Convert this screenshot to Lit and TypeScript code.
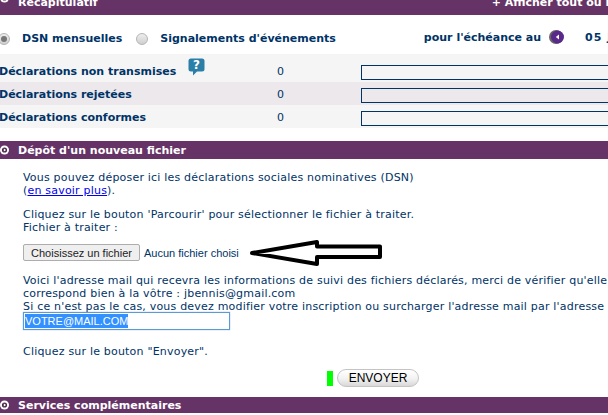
import { LitElement, html, css, svg } from "lit";
import { customElement } from "lit/decorators.js";

const bullet = svg`<svg class="bullet" width="10" height="10" viewBox="0 0 10 10"><circle cx="4.500" cy="5" r="4.500" fill="#fff"/><circle cx="4.500" cy="5" r="2.600" fill="#4a2a4a"/><path d="M3.800 3.400 6.200 5 3.800 6.600z" fill="#fff"/></svg>`;

@customElement("app-root")
export class AppRoot extends LitElement {
  static styles = css`
    :host { display: block; width: 608px; height: 415px; overflow: hidden; background: #fff; font-family: "DejaVu Sans", Verdana, sans-serif; font-size: 11px; color: #003366; }
    .bar { background: #663366; color: #fff; font-weight: bold; display: flex; align-items: center; white-space: nowrap; overflow: hidden; }
    .bar.top { height: 15px; align-items: flex-end; position: relative; }
    .bar.top span { line-height: 13px; margin-bottom: 6px; }
    .bar.top .t { margin-left: 18px; }
    .bar.top .r { margin-left: auto; margin-right: -22px; }
    .bar.top .bullet { position: absolute; left: 0; top: -7px; margin: 0; }
    .bullet { flex: none; }
    .bar .bullet { margin-right: 8px; }
    .bar.sec { height: 18px; margin-top: 13px; }
    .bar.last { height: 16px; }
    .filters { height: 39px; display: flex; align-items: center; padding-top: 8px; box-sizing: border-box; font-weight: bold; white-space: nowrap; }
    .radio { width: 10px; height: 10px; border-radius: 50%; border: 1px solid #b5b5b5; background: linear-gradient(#eee, #cfcfcf); flex: none; display: flex; align-items: center; justify-content: center; }
    .radio.on i { display: block; width: 6px; height: 6px; border-radius: 50%; background: #777; }
    .radio.a { margin-left: -2px; margin-right: 12px; }
    .radio.b { margin-left: 14px; margin-right: 12px; }
    .due { margin-left: 88px; margin-top: -3px; display: flex; align-items: center; }
    .nav { margin: 0 20px 0 8px; flex: none; }
    .date { letter-spacing: 1px; }
    .rows { margin-left: -1px; width: 620px; }
    .row { display: grid; grid-template-columns: 278px 84px 1fr; align-items: end; font-weight: bold; background: #f5f5f5; height: 23px; padding-bottom: 1px; box-sizing: border-box; }
    .row.first { height: 28px; }
    .row.alt { background: #ece8ec; }
    .row .n { font-weight: normal; line-height: 13px; margin-bottom: 3px; }
    .row .lbl { position: relative; line-height: 13px; margin-bottom: 3px; }
    .help { position: absolute; left: 189px; top: -7px; }
    .help text { font: bold 12px "DejaVu Sans", sans-serif; fill: #fff; }
    .prog { height: 15px; border: 1px solid #003366; box-sizing: border-box; margin-bottom: 1px; }
    .body { padding: 12px 0 0 23px; line-height: 13px; white-space: nowrap; position: relative; height: 238px; box-sizing: border-box; letter-spacing: 0.2px; }
    p { margin: 0; }
    a { color: #0000ee; }
    .gap { margin-top: 11px; }
    .file { display: flex; align-items: center; margin-top: 10px; height: 17px; font: 11px "Liberation Sans", Arial, sans-serif; letter-spacing: 0; }
    .file button { font: 11px "Liberation Sans", Arial, sans-serif; height: 17px; width: 117px; padding: 0; border: 1px solid #adadad; border-radius: 2px; background: #efefef; color: #222; margin-right: 4px; }
    .arrow { position: absolute; left: 248px; top: 77px; }
    .mail { margin-top: 13px; }
    .input { width: 207px; height: 18px; margin-top: -1px; box-sizing: border-box; border: 1px solid #5b9bd5; box-shadow: 0 0 1px #7aa8e0; font: 11px "Liberation Sans", Arial, sans-serif; letter-spacing: 0; color: #fff; padding-left: 1px; display: flex; align-items: center; }
    .input span { background: #3390ff; line-height: 14px; }
    .click { margin-top: 15px; }
    .send { margin: 11px 0 0 304px; display: flex; align-items: center; gap: 4px; }
    .green { width: 6px; height: 15px; background: #00ff00; }
    .btn { width: 82px; height: 18px; box-sizing: border-box; border: 1px solid #c4c4c4; border-radius: 9px; background: linear-gradient(#fff 0%, #f2f2f2 55%, #d8d8d8 100%); font: 12px "Liberation Sans", Arial, sans-serif; color: #000; padding: 0; }
  `;

  render() {
    return html`
      <div class="bar top">${bullet}<span class="t">Récapitulatif</span><span class="r">+ Afficher tout ou rien</span></div>
      <div class="filters">
        <span class="radio a on"><i></i></span><span>DSN mensuelles</span>
        <span class="radio b"></span><span>Signalements d'événements</span>
        <span class="due">pour l'échéance au
          <svg class="nav" width="16" height="16" viewBox="0 0 16 16"><circle cx="7" cy="8" r="7" fill="#666"/><circle cx="8.500" cy="8" r="6.500" fill="#5a2a8a"/><path d="M10 5.500 6.800 8 10 10.500z" fill="#fff"/></svg>
          <span class="date">05 Juin</span></span>
      </div>
      <div class="rows">
        <div class="row first"><span class="lbl">Déclarations non transmises<svg class="help" width="17" height="18" viewBox="0 0 17 18"><path d="M3 .5h11a2.500 2.500 0 0 1 2.500 2.500v8a2.500 2.500 0 0 1-2.500 2.500H9l-4 4v-4H3A2.500 2.500 0 0 1 .5 11V3A2.500 2.500 0 0 1 3 .5z" fill="#2a7ea8"/><text x="5" y="11">?</text></svg></span><span class="n">0</span><span class="prog"></span></div>
        <div class="row alt"><span class="lbl">Déclarations rejetées</span><span class="n">0</span><span class="prog"></span></div>
        <div class="row"><span class="lbl">Déclarations conformes</span><span class="n">0</span><span class="prog"></span></div>
      </div>
      <div class="bar sec">${bullet}<span>Dépôt d'un nouveau fichier</span></div>
      <div class="body">
        <p>Vous pouvez déposer ici les déclarations sociales nominatives (DSN)<br>(<a href="#">en savoir plus</a>).</p>
        <p class="gap">Cliquez sur le bouton 'Parcourir' pour sélectionner le fichier à traiter.<br>Fichier à traiter :</p>
        <div class="file"><button>Choisissez un fichier</button><span>Aucun fichier choisi</span></div>
        <svg class="arrow" width="136" height="32" viewBox="0 0 136 32"><path d="M4 17 69 6v4.500h63V21H69v7z" fill="#fff" stroke="#000" stroke-width="4" stroke-linejoin="round"/></svg>
        <p class="mail">Voici l'adresse mail qui recevra les informations de suivi des fichiers déclarés, merci de vérifier qu'elle<br>correspond bien à la vôtre : jbennis@gmail.com<br>Si ce n'est pas le cas, vous devez modifier votre inscription ou surcharger l'adresse mail par l'adresse</p>
        <div class="input"><span>VOTRE@MAIL.COM</span></div>
        <p class="click">Cliquez sur le bouton "Envoyer".</p>
        <div class="send"><span class="green"></span><button class="btn">ENVOYER</button></div>
      </div>
      <div class="bar last">${bullet}<span>Services complémentaires</span></div>
    `;
  }
}
